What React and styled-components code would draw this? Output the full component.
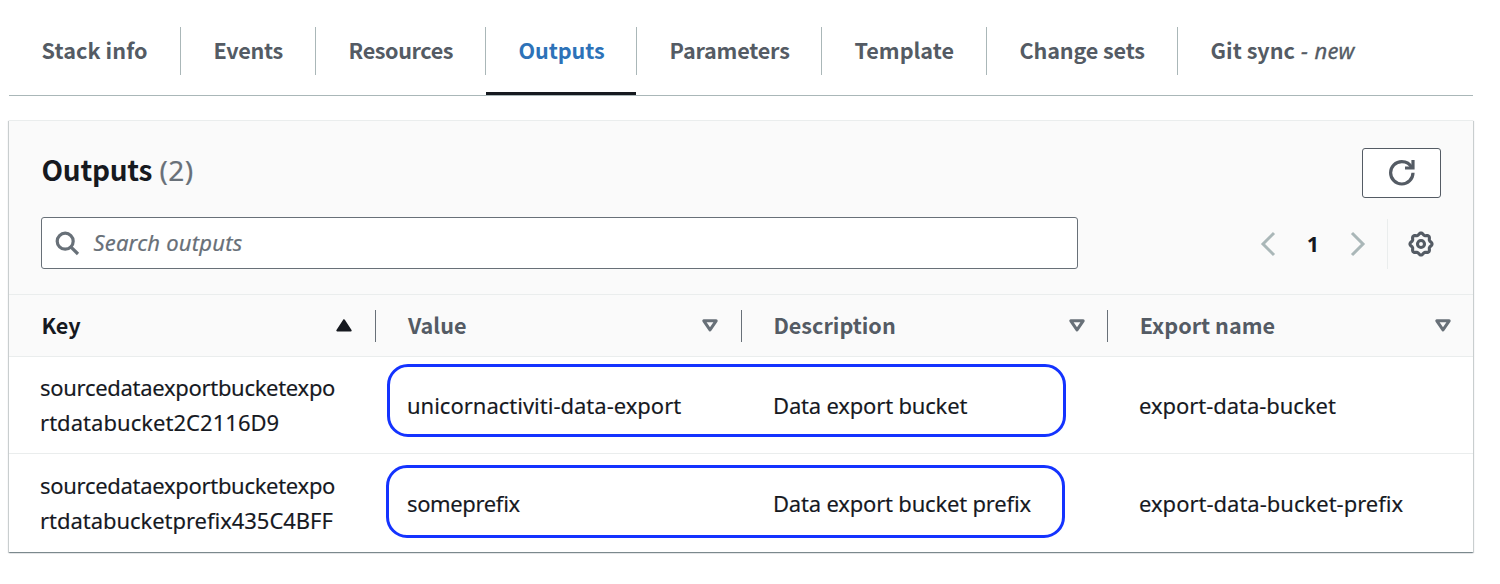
import React from "react";
import styled, { createGlobalStyle, css } from "styled-components";

const sans = '"Noto Sans CJK SC", "Noto Sans", sans-serif';
const humanist = '"Noto Sans", "Noto Sans CJK SC", sans-serif';

const GlobalStyle = createGlobalStyle`
  *, *::before, *::after { box-sizing: border-box; }
  body {
    margin: 0;
    background: #fff;
    color: #16191f;
    font-family: ${sans};
    font-size: 21.6px;
    line-height: 35px;
    font-feature-settings: "liga" 1;
  }
`;

const Page = styled.main`
  display: flex;
  flex-direction: column;
  gap: 24px;
  width: 1464px;
  min-height: 584px;
  margin-left: 9px;
`;

const TabBar = styled.nav`
  display: flex;
  height: 96px;
  padding-top: 27px;
  border-bottom: 1px solid #aab7b8;
`;

const Tab = styled.a`
  display: flex;
  flex-direction: column;
  justify-content: space-between;
  width: ${(p) => p.$width}px;
  color: ${(p) => (p.$active ? "#2d72b8" : "#545b64")};
  font-weight: 700;
  white-space: nowrap;
  letter-spacing: ${(p) => p.$tracking || 0}px;
  &::after {
    content: "";
    height: 3px;
    margin-right: 1px;
    background: ${(p) => (p.$active ? "#16191f" : "transparent")};
  }
`;

const TabLabel = styled.span`
  height: 48px;
  line-height: 46px;
  padding-left: 32.6px;
  border-right: 1px solid ${(p) => (p.$last ? "transparent" : "#aab7b8")};
`;

const NewFlag = styled.em`
  font-family: ${humanist};
  font-weight: 400;
  font-size: 22px;
  line-height: 1;
  letter-spacing: 0.4px;
  -webkit-text-stroke: 0.3px currentColor;
`;

const Panel = styled.section`
  height: 432px;
  border-top: 1px solid #eaeded;
  box-shadow:
    0 1px 1px 0 rgba(0, 28, 36, 0.3),
    1px 1px 1px 0 rgba(0, 28, 36, 0.17),
    -1px 1px 1px 0 rgba(0, 28, 36, 0.17);
`;

const PanelHeader = styled.header`
  display: flex;
  flex-direction: column;
  gap: 19px;
  height: 173px;
  padding: 27px 32px 0;
  background: #fafafa;
`;

const TitleRow = styled.div`
  display: flex;
  justify-content: space-between;
  height: 50px;
`;

const Title = styled.h2`
  margin: 0;
  padding-left: 0.5px;
  font-size: 28px;
  line-height: 43px;
  font-weight: 700;
  letter-spacing: -0.25px;
`;

const Counter = styled.span`
  margin-left: 1.2px;
  color: #687078;
  font-family: ${humanist};
  font-weight: 400;
  line-height: 1;
  letter-spacing: 0.5px;
  -webkit-text-stroke: 0.2px currentColor;
`;

const RefreshButton = styled.button`
  display: flex;
  align-items: center;
  justify-content: center;
  width: 79px;
  height: 50px;
  padding: 0 0 1px;
  border: 1px solid #545b64;
  border-radius: 3px;
  background: #fff;
  color: #545b64;
`;

const ToolRow = styled.div`
  display: flex;
  justify-content: space-between;
  height: 52px;
`;

const SearchBox = styled.div`
  display: flex;
  align-items: center;
  gap: 13.4px;
  width: 1037px;
  height: 52px;
  padding-left: 12.4px;
  border: 1px solid #687078;
  border-radius: 3px;
  background: #fff;
  color: #687078;
  font: italic 400 22px/48px ${humanist};
  letter-spacing: 0.22px;
  -webkit-text-stroke: 0.2px currentColor;
`;

const SearchHint = styled.span`
  height: 50px;
`;

const Paging = styled.div`
  display: flex;
  align-items: center;
  padding: 1px 7px 0 0;
`;

const PageNumber = styled.span`
  width: 75px;
  padding-left: 1px;
  text-align: center;
  font: 700 21.6px/50px ${humanist};
`;

const Divider = styled.span`
  width: 1px;
  height: 50px;
  margin: 0 20px 0 22px;
  background: #eaeded;
`;

const Row = styled.div`
  display: grid;
  grid-template-columns: 367px 366px 366px 365px;
  align-items: center;
`;

const HeadRow = styled(Row)`
  height: 63px;
  background: #fafafa;
  border-top: 1px solid #eaeded;
  border-bottom: 1px solid #eaeded;
`;

const HeadCell = styled.div`
  display: flex;
  align-items: center;
  justify-content: space-between;
  height: 32px;
  padding: 0 ${(p) => p.$end || 23}px 0 ${(p) => p.$inset || 31.4}px;
  color: ${(p) => (p.$sorted ? "#16191f" : "#545b64")};
  font-weight: 700;
  ${(p) => !p.$last && css`border-right: 1px solid #687078;`}
`;

const HeadLabel = styled.span`
  line-height: 32px;
  margin-top: -1px;
`;

const BodyRow = styled(Row)`
  position: relative;
  height: ${(p) => (p.$last ? 98 : 97)}px;
  background: #fff;
  font-family: ${humanist};
  font-size: 22px;
  -webkit-text-stroke: 0.15px currentColor;
  ${(p) => !p.$last && css`border-bottom: 1px solid #eaeded;`}
`;

const Cell = styled.div`
  padding-left: 31px;
  white-space: nowrap;
`;

const Line = styled.span`
  display: block;
  letter-spacing: ${(p) => p.$tracking || 0}px;
`;

const Highlight = styled.div`
  position: absolute;
  top: ${(p) => p.$top}px;
  left: ${(p) => p.$left}px;
  width: 679px;
  height: 73px;
  border: 3px solid #1433ff;
  border-radius: 21px;
  pointer-events: none;
`;

const Icon = styled.svg`
  display: block;
  flex: none;
  fill: none;
  stroke: currentColor;
  overflow: visible;
`;

const ChevronIcon = styled(Icon)`
  color: #aab7b8;
  stroke-width: 3;
`;

const RefreshIcon = () => (
  <Icon width="25.6" height="25.6" viewBox="0 0 16 16" strokeWidth="2">
    <path d="M15 8c0 3.87-3.13 7-7 7s-7-3.13-7-7 3.13-7 7-7c2.79 0 5.2 1.63 6.33 4" />
    <path d="M10 5h5V0" />
  </Icon>
);

const SearchIcon = () => (
  <Icon width="25.6" height="25.6" viewBox="0 0 16 16" strokeWidth="2">
    <circle cx="7" cy="7" r="5" />
    <path d="M15 15l-4.5-4.5" />
  </Icon>
);

const gearOutline =
  Array.from({ length: 96 }, (_, i) => {
    const a = (i / 96) * Math.PI * 2;
    const r = 10.1 + 0.95 * Math.cos(8 * a);
    return `${i ? "L" : "M"}${(13 + r * Math.cos(a)).toFixed(2)} ${(13 + r * Math.sin(a)).toFixed(2)}`;
  }).join("") + "Z";

const GearIcon = () => (
  <Icon width="26" height="26" viewBox="0 0 26 26" strokeWidth="3.1" color="#545b64">
    <path d={gearOutline} strokeLinejoin="round" />
    <circle cx="13" cy="13" r="3.5" />
  </Icon>
);

const SortIcon = ({ sorted }) => (
  <Icon width="16" height="13" viewBox="0 0 16 13" strokeLinejoin="round">
    {sorted ? (
      <path d="M8 1.2L1.3 11.5h13.4z" fill="currentColor" strokeWidth="2" />
    ) : (
      <path d="M1.8 1.8h12.4L8 10.9z" stroke="#687078" strokeWidth="3" />
    )}
  </Icon>
);

const tabs = [
  { label: "Stack info", width: 172, tracking: 0.08 },
  { label: "Events", width: 135, tracking: -0.3 },
  { label: "Resources", width: 170, tracking: -0.4 },
  { label: "Outputs", width: 151, active: true, tracking: -0.1 },
  { label: "Parameters", width: 185, tracking: -0.2 },
  { label: "Template", width: 165 },
  { label: "Change sets", width: 191, tracking: -0.16 },
  { label: "Git sync", width: 220, isNew: true },
];

const columns = [
  { label: "Key", sorted: true, inset: 32.4 },
  { label: "Value", inset: 32 },
  { label: "Description", end: 22 },
  { label: "Export name", inset: 31.8, end: 22 },
];

const rows = [
  {
    highlight: { top: 7, left: 378 },
    cells: [
      [["sourcedataexportbucketexpo", -0.3], ["rtdatabucket2C2116D9", 0.04]],
      [["unicornactiviti-data-export"]],
      [["Data export bucket", -0.18]],
      [["export-data-bucket", -0.04]],
    ],
  },
  {
    highlight: { top: 11, left: 377 },
    cells: [
      [["sourcedataexportbucketexpo", -0.3], ["rtdatabucketprefix435C4BFF", -0.04]],
      [["someprefix", -0.38]],
      [["Data export bucket prefix", -0.19]],
      [["export-data-bucket-prefix"]],
    ],
  },
];

export default function App() {
  return (
    <>
      <GlobalStyle />
      <Page>
        <TabBar>
          {tabs.map((t, i) => (
            <Tab key={t.label} $width={t.width} $active={t.active} $tracking={t.tracking}>
              <TabLabel $last={i === tabs.length - 1}>
                {t.label}
                {t.isNew && <NewFlag> - new</NewFlag>}
              </TabLabel>
            </Tab>
          ))}
        </TabBar>
        <Panel>
          <PanelHeader>
            <TitleRow>
              <Title>
                Outputs <Counter>(2)</Counter>
              </Title>
              <RefreshButton aria-label="Refresh">
                <RefreshIcon />
              </RefreshButton>
            </TitleRow>
            <ToolRow>
              <SearchBox>
                <SearchIcon />
                <SearchHint>Search outputs</SearchHint>
              </SearchBox>
              <Paging>
                <ChevronIcon width="15" height="26" viewBox="0 0 15 26">
                  <path d="M14 2L3 13L14 24" />
                </ChevronIcon>
                <PageNumber>1</PageNumber>
                <ChevronIcon width="15" height="26" viewBox="0 0 15 26">
                  <path d="M2 2L13 13L2 24" />
                </ChevronIcon>
                <Divider />
                <GearIcon />
              </Paging>
            </ToolRow>
          </PanelHeader>
          <HeadRow>
            {columns.map((c, i) => (
              <HeadCell
                key={c.label}
                $sorted={c.sorted}
                $inset={c.inset}
                $end={c.end}
                $last={i === columns.length - 1}
              >
                <HeadLabel>{c.label}</HeadLabel>
                <SortIcon sorted={c.sorted} />
              </HeadCell>
            ))}
          </HeadRow>
          {rows.map((row, r) => (
            <BodyRow key={r} $last={r === rows.length - 1}>
              {row.cells.map((lines, c) => (
                <Cell key={c}>
                  {lines.map(([text, tracking]) => (
                    <Line key={text} $tracking={tracking}>
                      {text}
                    </Line>
                  ))}
                </Cell>
              ))}
              <Highlight $top={row.highlight.top} $left={row.highlight.left} />
            </BodyRow>
          ))}
        </Panel>
      </Page>
    </>
  );
}
